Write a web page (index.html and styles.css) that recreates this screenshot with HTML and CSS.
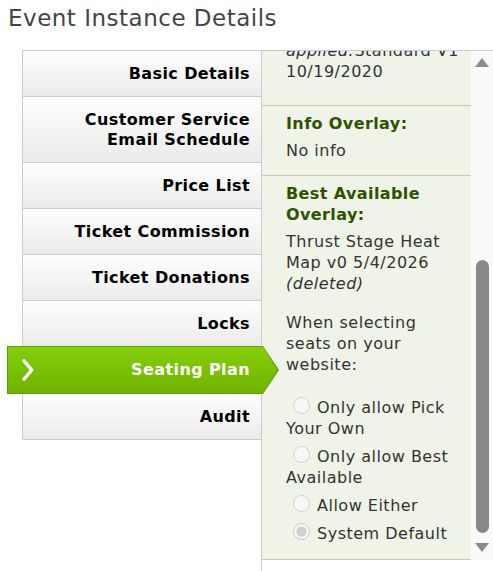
FILE: index.html
```html
<!DOCTYPE html>
<html lang="en">
<head>
<meta charset="utf-8">
<title>Event Instance Details</title>
<link rel="stylesheet" href="styles.css">
</head>
<body>
<h1 class="page-title">Event Instance Details</h1>
<div class="layout">
  <ul class="tabs">
    <li class="tab">Basic Details</li>
    <li class="tab">Customer Service<br>Email Schedule</li>
    <li class="tab">Price List</li>
    <li class="tab">Ticket Commission</li>
    <li class="tab">Ticket Donations</li>
    <li class="tab">Locks</li>
    <li class="tab tab-active">
      <svg class="chevron" width="12" height="22" viewBox="0 0 12 22"><polyline points="2,1.8 9.8,11 2,20.2" fill="none" stroke="#fff" stroke-width="3.4" stroke-linecap="round" stroke-linejoin="round"/></svg>
      <span>Seating Plan</span>
    </li>
    <li class="tab">Audit</li>
  </ul>
  <div class="detail">
    <div class="panel-wrap">
      <div class="panel">
        <div class="sec sec-first">
          <p class="txt"><i>applied:</i>Standard V1<br>10/19/2020</p>
        </div>
        <div class="sec">
          <h3 class="sec-title">Info Overlay:</h3>
          <p class="txt">No info</p>
        </div>
        <div class="sec sec-last">
          <h3 class="sec-title">Best Available Overlay:</h3>
          <p class="txt">Thrust Stage Heat Map v0 5/4/2026 <i>(deleted)</i></p>
          <p class="txt">When selecting seats on your website:</p>
          <div class="choices">
            <label class="opt"><input class="radio" type="radio" name="sel" disabled>Only allow Pick Your Own</label>
            <label class="opt"><input class="radio" type="radio" name="sel" disabled>Only allow Best Available</label>
            <label class="opt"><input class="radio" type="radio" name="sel" disabled>Allow Either</label>
            <label class="opt"><input class="radio" type="radio" name="sel" checked disabled>System Default</label>
          </div>
        </div>
      </div>
      <div class="scrollbar">
        <span class="arrow arrow-up"></span>
        <span class="thumb"></span>
        <span class="arrow arrow-down"></span>
      </div>
    </div>
  </div>
</div>
</body>
</html>
```
FILE: styles.css
```css
* { box-sizing: border-box; }

body {
  margin: 0;
  background: #fff;
  font-family: "DejaVu Sans", Verdana, sans-serif;
  color: #333;
}

.page-title {
  margin: 0;
  padding: 4px 0 0 8px;
  font-size: 23px;
  line-height: 28px;
  font-weight: normal;
  letter-spacing: 0.5px;
  color: #444;
}

.layout {
  display: flex;
  margin: 18px 0 0 22px;
}

.tabs {
  flex: none;
  align-self: flex-start;
  list-style: none;
  margin: 0;
  padding: 0;
  width: 239px;
  border-left: 1px solid #ccc;
  border-top: 1px solid #ccc;
}

.tab {
  padding: 13px 11px 12px 12px;
  font-size: 16px;
  line-height: 20px;
  font-weight: bold;
  letter-spacing: 0.4px;
  text-align: right;
  color: #000;
  border-bottom: 1px solid #ccc;
  background: linear-gradient(#fefefe, #ebebeb);
}

.tab-active {
  position: relative;
  z-index: 1;
  display: flex;
  justify-content: space-between;
  align-items: center;
  margin: -1px -2px 0 -16px;
  padding: 13px 13px 13px 14px;
  border: 1px solid #5e9c0b;
  border-right: 0;
  color: #fff;
  background: linear-gradient(#86cd0c, #70b400);
}

.tab-active::before,
.tab-active::after {
  content: "";
  position: absolute;
  left: 100%;
  top: -1px;
  bottom: -1px;
  width: 16px;
}

.tab-active::before {
  background: #5e9c0b;
  clip-path: polygon(0 0, 100% 50%, 0 100%);
}

.tab-active::after {
  background: linear-gradient(#86cd0c, #70b400);
  clip-path: polygon(0 1px, calc(100% - 1.6px) 50%, 0 calc(100% - 1px));
}

.chevron {
  display: block;
  margin: -1px 0;
}

.detail {
  flex: 1;
  min-height: 521px;
  border-left: 1px solid #ccc;
  border-top: 1px solid #ccc;
}

.panel-wrap {
  display: flex;
  height: 509px;
}

.panel {
  flex: 1;
  overflow: hidden;
  background: #f0f3e8;
  border-bottom: 1px solid #c5cea6;
  font-size: 16px;
  line-height: 21px;
  letter-spacing: 0.5px;
  color: #333;
}

.sec {
  padding: 7px 10px 14px 24px;
  border-top: 1px solid #c5cea6;
}

.sec-first {
  margin-top: -11px;
  padding-top: 0;
  padding-bottom: 23px;
  border-top: 0;
}

.sec-title {
  margin: 0 0 6px;
  font-size: 16px;
  line-height: 21px;
  font-weight: bold;
  letter-spacing: 0.4px;
  color: #2f5200;
}

.txt {
  margin: 0;
}

.txt + .txt {
  margin-top: 18px;
}

.choices {
  margin-top: 22px;
}

.opt {
  display: block;
}

.opt + .opt {
  margin-top: 7px;
}

.radio {
  appearance: none;
  -webkit-appearance: none;
  width: 17px;
  height: 17px;
  margin: 0 7px -1px 7px;
  border: 1px solid #d0d0d0;
  border-radius: 50%;
  background: #f7f7f7;
  vertical-align: baseline;
}

.radio:checked {
  border-color: #c8c8c8;
  background: radial-gradient(circle, #d0d0d0 0 4.8px, #f7f7f7 5.4px);
}

.scrollbar {
  flex: none;
  width: 22px;
  background: #fafafa;
  display: flex;
  flex-direction: column;
  align-items: center;
}

.arrow {
  display: block;
  width: 0;
  height: 0;
  border-left: 7px solid transparent;
  border-right: 7px solid transparent;
}

.arrow-up {
  margin-top: 7px;
  border-bottom: 9px solid #8c8c8c;
}

.thumb {
  display: block;
  width: 13px;
  height: 273px;
  margin-top: 193px;
  border-radius: 7px;
  background: #888;
}

.arrow-down {
  margin-top: 10px;
  border-top: 9px solid #8c8c8c;
}
```
